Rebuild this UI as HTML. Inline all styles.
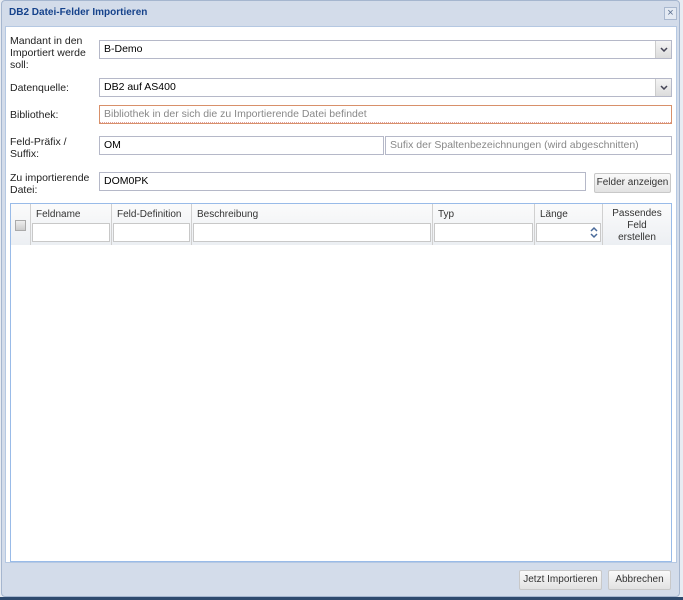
<!DOCTYPE html>
<html><head><meta charset="utf-8"><style>
*{box-sizing:border-box;margin:0;padding:0}
body{width:683px;height:600px;overflow:hidden;background:#e8ecf2;font-family:"Liberation Sans",sans-serif;font-size:11px;color:#000;position:relative}
.a{position:absolute;white-space:nowrap}
.frame{left:1px;top:0;width:679px;height:597px;background:#d3dcea;border:1px solid #a5b6cf;border-radius:4px}
.bottombar{left:0;top:597px;width:683px;height:3px;background:#2e4a6e}
.title{left:9px;top:7px;font-weight:bold;color:#15428b;font-size:10px}
.close{left:664px;top:7px;width:13px;height:13px;border:1px solid #a9b8cf;background:#e4eaf3;color:#5a6f8f;font-size:11px;line-height:10px;text-align:center}
.body{left:5px;top:26px;width:672px;height:537px;background:#fff;border:1px solid #b5c8e2}
.lbl{color:#222;font-size:10.5px;line-height:12px}
.inp{border:1px solid #b5b8c8;background:#fff;height:19px;padding:2px 4px;line-height:13px;font-size:10.5px;overflow:hidden}
.ph{color:#888}
.trig{position:absolute;right:0;top:0;width:16px;height:17px;background:linear-gradient(#f4f4f4,#dcdcdc);border-left:1px solid #ccc}
.trig svg{position:absolute;left:4px;top:6px}
.btn{border:1px solid #c8c8c8;border-radius:2px;background:linear-gradient(#fafafa,#e2e2e2);text-align:center;line-height:18px;font-size:10px;color:#333;white-space:nowrap;overflow:hidden}
.grid{left:10px;top:203px;width:662px;height:359px;border:1px solid #99bbe8;background:#fff}
.hd{position:absolute;top:0;height:41px;border-right:1px solid #d0d0d0;background:linear-gradient(#fbfbfb,#eceff3);color:#333;font-size:10px}
.hd span{position:absolute;left:5px;top:5px}
.hf{position:absolute;top:19px;left:1px;right:1px;height:19px;border:1px solid #c8c8c8;background:#fff}
</style></head><body>
<div class="a frame"></div>
<div class="a bottombar"></div>
<div class="a title">DB2 Datei-Felder Importieren</div>
<div class="a close">×</div>
<div class="a body"></div>

<div class="a lbl" style="left:10px;top:35px">Mandant in den<br>Importiert werde<br>soll:</div>
<div class="a inp" style="left:99px;top:40px;width:573px">B-Demo<div class="trig"><svg width="8" height="5"><path d="M1 1L4 4L7 1" stroke="#445" stroke-width="1.5" fill="none"/></svg></div></div>

<div class="a lbl" style="left:10px;top:82px">Datenquelle:</div>
<div class="a inp" style="left:99px;top:78px;width:573px">DB2 auf AS400<div class="trig"><svg width="8" height="5"><path d="M1 1L4 4L7 1" stroke="#445" stroke-width="1.5" fill="none"/></svg></div></div>

<div class="a lbl" style="left:10px;top:109px">Bibliothek:</div>
<div class="a inp ph" style="left:99px;top:105px;width:573px;border-color:#d8906a"><div style="position:absolute;left:0;right:0;bottom:0;border-bottom:1px dotted #e0a0a0"></div>Bibliothek in der sich die zu Importierende Datei befindet</div>

<div class="a lbl" style="left:10px;top:136px">Feld-Präfix /<br>Suffix:</div>
<div class="a inp" style="left:99px;top:136px;width:285px">OM</div>
<div class="a inp ph" style="left:385px;top:136px;width:287px">Sufix der Spaltenbezeichnungen (wird abgeschnitten)</div>

<div class="a lbl" style="left:10px;top:172px">Zu importierende<br>Datei:</div>
<div class="a inp" style="left:99px;top:172px;width:487px">DOM0PK</div>
<div class="a btn" style="left:594px;top:173px;width:77px;height:20px">Felder anzeigen</div>

<div class="a grid">
 <div class="hd" style="left:0;width:20px"><div style="position:absolute;left:4px;top:16px;width:11px;height:11px;border:1px solid #aaa;background:linear-gradient(#eee,#ccc)"></div></div>
 <div class="hd" style="left:20px;width:81px"><span>Feldname</span><div class="hf"></div></div>
 <div class="hd" style="left:101px;width:80px"><span>Feld-Definition</span><div class="hf"></div></div>
 <div class="hd" style="left:181px;width:241px"><span>Beschreibung</span><div class="hf"></div></div>
 <div class="hd" style="left:422px;width:102px"><span>Typ</span><div class="hf"></div></div>
 <div class="hd" style="left:524px;width:68px"><span>Länge</span><div class="hf"><svg style="position:absolute;right:2px;top:2px" width="8" height="13"><path d="M1 5L4 2L7 5M1 8L4 11L7 8" stroke="#4a6a9a" stroke-width="1.5" fill="none"/></svg></div></div>
 <div class="hd" style="left:592px;width:68px;border-right:none;text-align:center;line-height:12px;padding-top:4px">Passendes<br>Feld<br>erstellen</div>
</div>

<div class="a btn" style="left:519px;top:570px;width:83px;height:20px">Jetzt Importieren</div>
<div class="a btn" style="left:608px;top:570px;width:63px;height:20px">Abbrechen</div>
</body></html>
